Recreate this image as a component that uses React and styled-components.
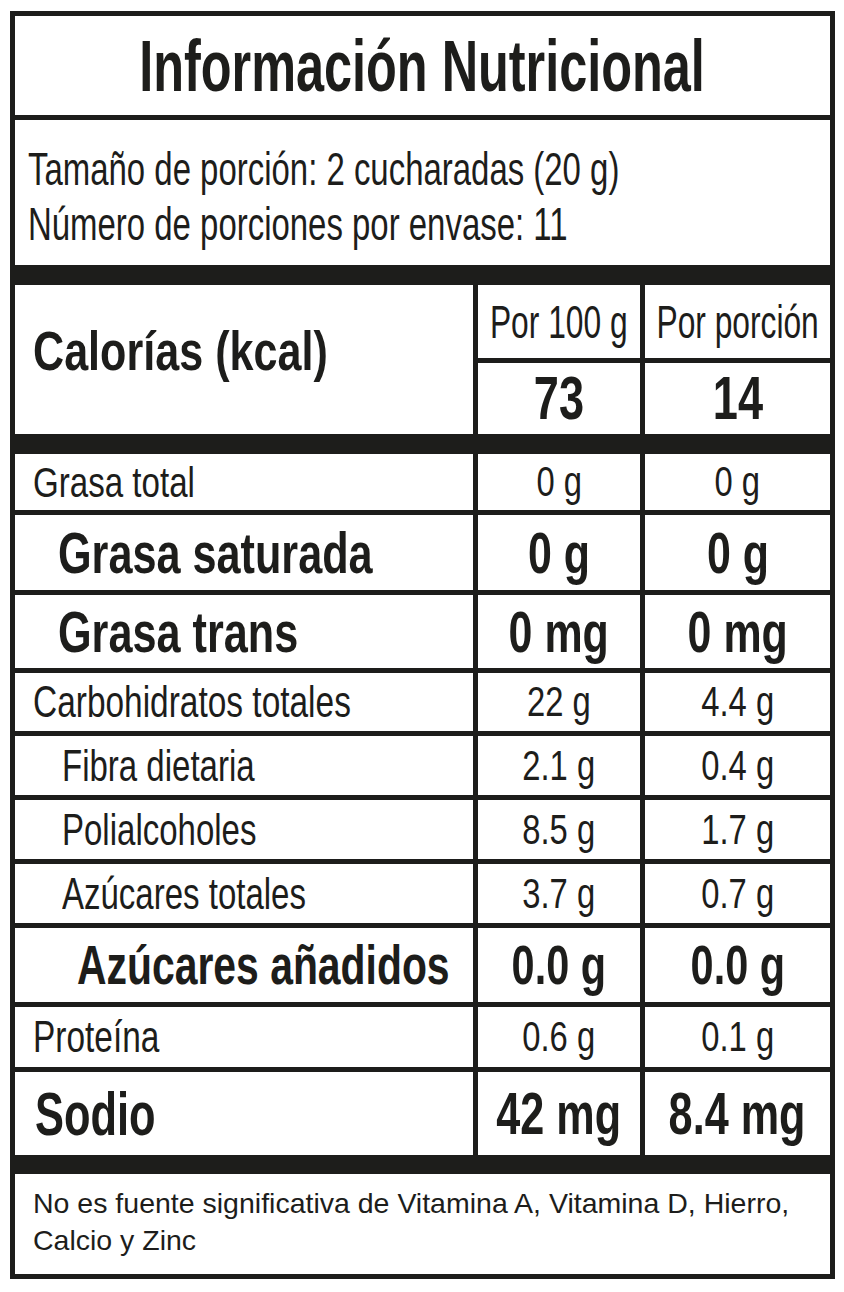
import React from "react";
import styled, { createGlobalStyle } from "styled-components";

const INK = "#1d1d1b";
const FONT = `"Liberation Sans", Arial, sans-serif`;

const Global = createGlobalStyle`
  html, body { margin: 0; padding: 0; background: #ffffff; }
  body { font-family: ${FONT}; color: ${INK}; }
  * { box-sizing: border-box; }
`;

const COLS = "458px 162px 185px";

const Panel = styled.div`
  margin: 11px 0 0 10px;
  width: 825px;
  background: ${INK};
  padding: 5px;
  display: flex;
  flex-direction: column;
  gap: 5px;
`;

/* condensed type: the label uses a narrow grotesque, drawn here by squeezing Arial-metric glyphs */
const Squeeze = styled.span`
  display: inline-block;
  white-space: nowrap;
  transform: scaleX(${(p) => p.$x});
  transform-origin: ${(p) => (p.$left ? "left center" : "center center")};
`;

const Title = styled.h1`
  margin: 0;
  height: 99px;
  background: #fff;
  display: flex;
  align-items: center;
  justify-content: center;
  font-size: 72px;
  font-weight: 700;
  line-height: 1;
`;

const Serving = styled.div`
  height: 145px;
  background: #fff;
  padding: 22px 0 0 13px;
  font-size: 46px;
  line-height: 55px;
  display: flex;
  flex-direction: column;
  align-items: flex-start;
`;

const Calories = styled.div`
  display: grid;
  grid-template-columns: ${COLS};
  grid-template-rows: 73px 71px;
  gap: 5px;
  margin-top: 15px;
`;

const Cell = styled.div`
  background: #fff;
  display: flex;
  align-items: center;
  justify-content: ${(p) => (p.$center ? "center" : "flex-start")};
  font-size: ${(p) => p.$size}px;
  font-weight: ${(p) => (p.$bold ? 700 : 400)};
  line-height: 1;
  white-space: nowrap;
  overflow: hidden;
`;

const CalLabel = styled(Cell)`
  grid-row: 1 / span 2;
  padding: 0 0 18px 18px;
`;

const Row = styled.div`
  display: grid;
  grid-template-columns: ${COLS};
  gap: 5px;
  height: ${(p) => p.$h}px;
  margin-top: ${(p) => p.$top || 0}px;
`;

const Label = styled(Cell)`
  padding-left: ${(p) => p.$indent}px;
`;

const Footer = styled.div`
  margin-top: 14px;
  height: 100px;
  background: #fff;
  padding: 11px 10px 0 18px;
  font-size: 28.5px;
  line-height: 37px;
`;

const rows = [
  { label: "Grasa total", a: "0 g", b: "0 g", h: 56, indent: 18, size: 43, lx: 0.77, top: 15 },
  { label: "Grasa saturada", a: "0 g", b: "0 g", h: 75, indent: 43, size: 58, lx: 0.745, bold: true },
  { label: "Grasa trans", a: "0 mg", b: "0 mg", h: 73, indent: 43, size: 58, lx: 0.745, bold: true },
  { label: "Carbohidratos totales", a: "22 g", b: "4.4 g", h: 58, indent: 18, size: 44, lx: 0.76 },
  { label: "Fibra dietaria", a: "2.1 g", b: "0.4 g", h: 59, indent: 47, size: 44, lx: 0.75 },
  { label: "Polialcoholes", a: "8.5 g", b: "1.7 g", h: 59, indent: 47, size: 44, lx: 0.75 },
  { label: "Azúcares totales", a: "3.7 g", b: "0.7 g", h: 59, indent: 47, size: 44, lx: 0.75 },
  { label: "Azúcares añadidos", a: "0.0 g", b: "0.0 g", h: 74, indent: 62, size: 56, lx: 0.73, bold: true },
  { label: "Proteína", a: "0.6 g", b: "0.1 g", h: 60, indent: 18, size: 44, lx: 0.76 },
  { label: "Sodio", a: "42 mg", b: "8.4 mg", h: 83, indent: 20, size: 62, lx: 0.7, bold: true, vsize: 60, vx: 0.72 },
];

export default function App() {
  return (
    <>
      <Global />
      <Panel>
        <Title>
          <Squeeze $x={0.7}>Información Nutricional</Squeeze>
        </Title>
        <Serving>
          <Squeeze $x={0.716} $left>Tamaño de porción: 2 cucharadas (20 g)</Squeeze>
          <Squeeze $x={0.716} $left>Número de porciones por envase: 11</Squeeze>
        </Serving>
        <Calories>
          <CalLabel $size={56} $bold>
            <Squeeze $x={0.77} $left>Calorías (kcal)</Squeeze>
          </CalLabel>
          <Cell $center $size={46}><Squeeze $x={0.69}>Por 100 g</Squeeze></Cell>
          <Cell $center $size={46}><Squeeze $x={0.69}>Por porción</Squeeze></Cell>
          <Cell $center $size={61} $bold><Squeeze $x={0.74}>73</Squeeze></Cell>
          <Cell $center $size={61} $bold><Squeeze $x={0.74}>14</Squeeze></Cell>
        </Calories>
        {rows.map((r) => {
          const vs = r.vsize || (r.bold ? r.size : 42);
          const vx = r.vx || (r.bold ? 0.74 : 0.78);
          return (
            <Row key={r.label} $h={r.h} $top={r.top}>
              <Label $indent={r.indent} $size={r.size} $bold={r.bold}>
                <Squeeze $x={r.lx} $left>{r.label}</Squeeze>
              </Label>
              <Cell $center $size={vs} $bold={r.bold}><Squeeze $x={vx}>{r.a}</Squeeze></Cell>
              <Cell $center $size={vs} $bold={r.bold}><Squeeze $x={vx}>{r.b}</Squeeze></Cell>
            </Row>
          );
        })}
        <Footer>
          No es fuente significativa de Vitamina A, Vitamina D, Hierro, Calcio y Zinc
        </Footer>
      </Panel>
    </>
  );
}
